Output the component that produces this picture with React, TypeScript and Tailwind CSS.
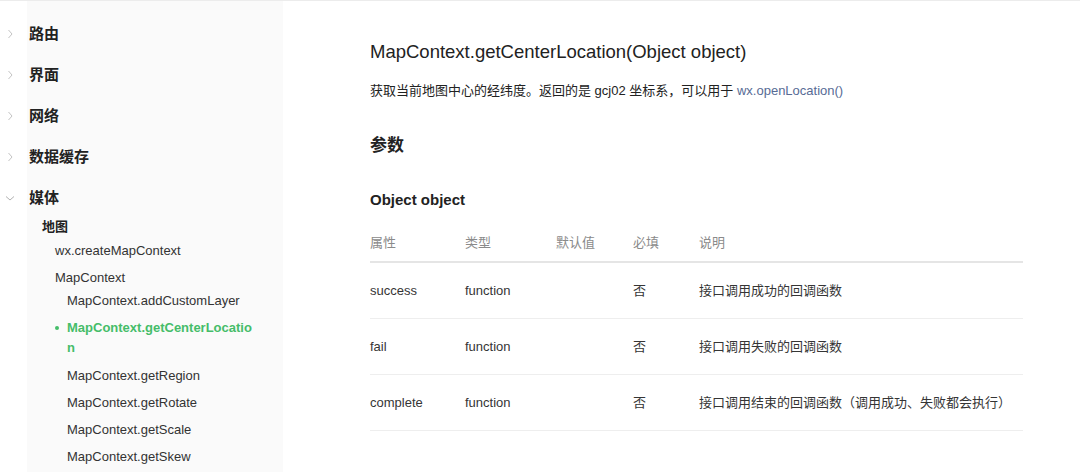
import React from "react";

const font = '"Liberation Sans", "Noto Sans CJK SC", sans-serif';

function Chevron({ open }: { open?: boolean }) {
  return (
    <svg width="12" height="12" viewBox="0 0 12 12" className="shrink-0">
      {open ? (
        <path d="M2 4.5 L6 8 L10 4.5" fill="none" stroke="#b2b2b2" strokeWidth="1" />
      ) : (
        <path d="M4.5 2 L8 6 L4.5 10" fill="none" stroke="#c4c4c4" strokeWidth="1" />
      )}
    </svg>
  );
}

const cats = ["路由", "界面", "网络", "数据缓存"];

const rows = [
  { name: "success", desc: "接口调用成功的回调函数" },
  { name: "fail", desc: "接口调用失败的回调函数" },
  { name: "complete", desc: "接口调用结束的回调函数（调用成功、失败都会执行）" },
];

export default function App() {
  return (
    <div
      className="flex w-[1080px] h-[472px] overflow-hidden border-t border-[#ececec] bg-white text-[#333]"
      style={{ fontFamily: font }}
    >
      {/* Sidebar */}
      <aside className="w-[283px] shrink-0 h-full bg-[linear-gradient(to_right,#ffffff_27px,#fafafa_27px)] pt-[12px]">
        {cats.map((c) => (
          <div key={c} className="flex items-center h-[41px]">
            <div className="w-[29px] flex justify-start pl-[4px]">
              <Chevron />
            </div>
            <span className="text-[15px] font-bold leading-[20px] text-[#222]">{c}</span>
          </div>
        ))}
        <div className="flex items-center h-[41px]">
          <div className="w-[29px] flex justify-start pl-[4px]">
            <Chevron open />
          </div>
          <span className="text-[15px] font-bold leading-[20px] text-[#222]">媒体</span>
        </div>
        <div className="pl-[42px] text-[13px] font-bold leading-[20px] text-[#222] -mt-[1px]">地图</div>
        <div className="pl-[55px] text-[13px] leading-[20px] mt-[4px]">wx.createMapContext</div>
        <div className="pl-[55px] text-[13px] leading-[20px] mt-[7px]">MapContext</div>
        <div className="pl-[67px] text-[13px] leading-[20px] mt-[3px]">MapContext.addCustomLayer</div>
        <div className="relative pl-[67px] pr-[29px] text-[13px] leading-[20px] mt-[7px] text-[#45bd69] font-bold break-all">
          <span className="absolute left-[55px] top-[8px] w-[4px] h-[4px] rounded-full bg-[#45bd69]" />
          MapContext.getCenterLocation
        </div>
        <div className="pl-[67px] text-[13px] leading-[20px] mt-[8px]">MapContext.getRegion</div>
        <div className="pl-[67px] text-[13px] leading-[20px] mt-[7px]">MapContext.getRotate</div>
        <div className="pl-[67px] text-[13px] leading-[20px] mt-[7px]">MapContext.getScale</div>
        <div className="pl-[67px] text-[13px] leading-[20px] mt-[7px]">MapContext.getSkew</div>
      </aside>

      {/* Main */}
      <main className="flex-1 pl-[87px] pt-[37px]">
        <div className="w-[653px]">
          <h1 className="text-[18.5px] leading-[28px] font-normal text-[#222]">
            MapContext.getCenterLocation(Object object)
          </h1>
          <p className="mt-[15px] text-[13px] leading-[20px] text-[#222]">
            获取当前地图中心的经纬度。返回的是 gcj02 坐标系，可以用于{" "}
            <span className="text-[#576b95]">wx.openLocation()</span>
          </p>
          <h2 className="mt-[33px] text-[17px] leading-[24px] font-bold text-[#222]">参数</h2>
          <h3 className="mt-[31px] text-[15px] leading-[22px] font-bold text-[#222]">Object object</h3>
          <div className="text-[13px] leading-[20px]">
            <div className="flex pt-[22px] pb-[8px] border-b-2 border-[#e5e5e5] text-[#8a8a8a]">
              <div className="w-[95px]">属性</div>
              <div className="w-[91px]">类型</div>
              <div className="w-[77px]">默认值</div>
              <div className="w-[66px]">必填</div>
              <div className="flex-1">说明</div>
            </div>
            {rows.map((r) => (
              <div key={r.name} className="flex items-center h-[56px] border-b border-[#eeeeee] text-[#353535]">
                <div className="w-[95px]">{r.name}</div>
                <div className="w-[91px]">function</div>
                <div className="w-[77px]"></div>
                <div className="w-[66px]">否</div>
                <div className="flex-1">{r.desc}</div>
              </div>
            ))}
          </div>
        </div>
      </main>
    </div>
  );
}
